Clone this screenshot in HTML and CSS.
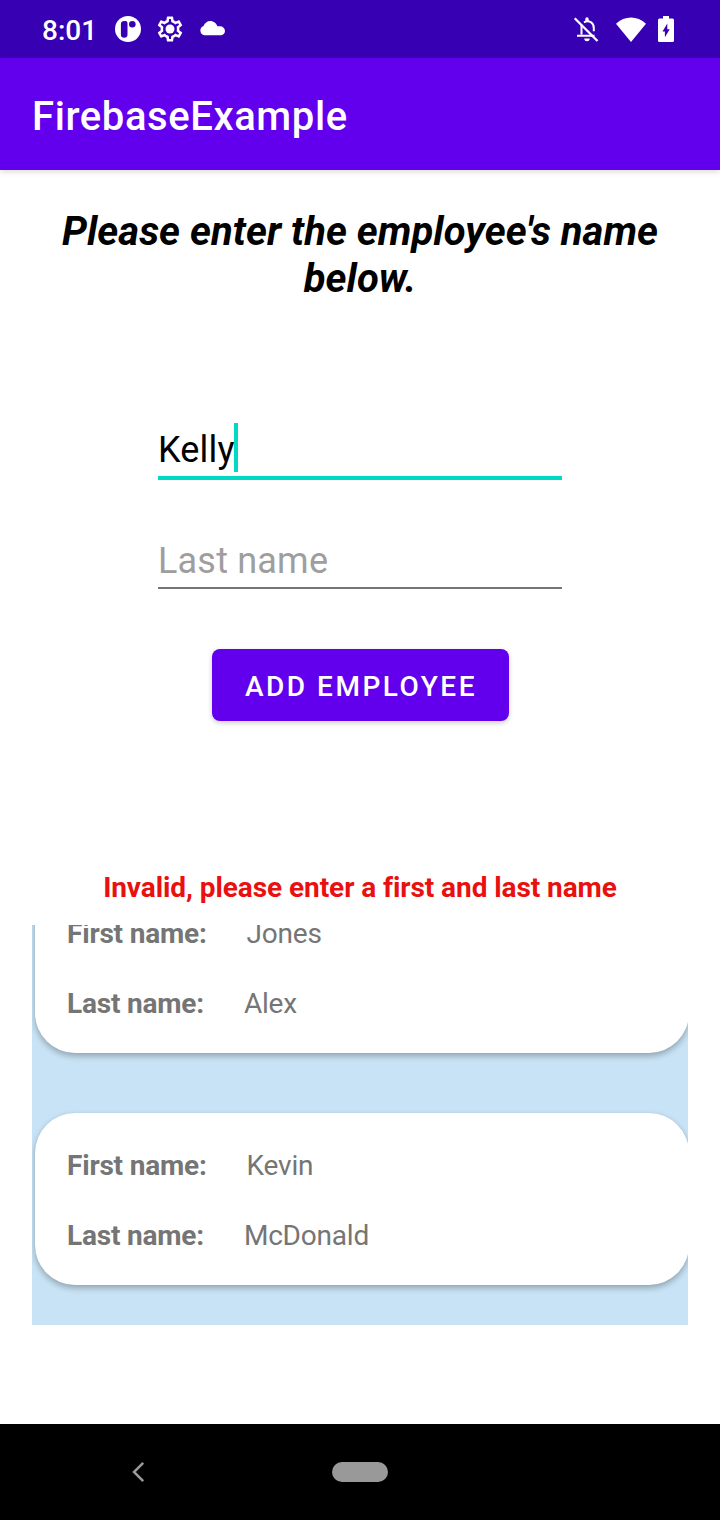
FILE: index.html
```html
<!DOCTYPE html>
<html lang="en">
<head>
<meta charset="utf-8">
<title>FirebaseExample</title>
<link rel="stylesheet" href="styles.css">
</head>
<body>
<div class="screen">
  <div class="status-bar">
    <span class="clock">8:01</span>
    <svg class="icon-app" width="26" height="26" viewBox="0 0 26 26"><circle cx="13" cy="13" r="13" fill="#fff"/><path d="M9.200 5h1.300a2 2 0 0 1 2 2v11.500a3.300 3.300 0 0 1-6.600 0V8.300A3.300 3.300 0 0 1 9.200 5z" fill="#3700b3"/><circle cx="17.300" cy="8.300" r="3.300" fill="#3700b3"/></svg>
    <svg class="icon-gear" width="30" height="30" viewBox="0 0 24 24" fill="#fff"><path d="M19.43 12.98c.04-.32.07-.64.07-.98s-.03-.66-.07-.98l2.11-1.65c.19-.15.24-.42.12-.64l-2-3.46c-.09-.16-.26-.25-.44-.25-.06 0-.12.01-.17.03l-2.49 1c-.52-.4-1.08-.73-1.69-.98l-.38-2.65C14.46 2.18 14.25 2 14 2h-4c-.25 0-.46.18-.49.42l-.38 2.65c-.61.25-1.17.59-1.69.98l-2.49-1c-.06-.02-.12-.03-.18-.03-.17 0-.34.09-.43.25l-2 3.46c-.13.22-.07.49.12.64l2.11 1.65c-.04.32-.07.65-.07.98s.03.66.07.98l-2.11 1.65c-.19.15-.24.42-.12.64l2 3.46c.09.16.26.25.44.25.06 0 .12-.01.17-.03l2.49-1c.52.4 1.08.73 1.69.98l.38 2.65c.03.24.24.42.49.42h4c.25 0 .46-.18.49-.42l.38-2.65c.61-.25 1.17-.59 1.69-.98l2.49 1c.06.02.12.03.18.03.17 0 .34-.09.43-.25l2-3.46c.12-.22.07-.49-.12-.64l-2.11-1.65zm-1.98-1.71c.04.31.05.52.05.73s-.02.43-.05.73l-.14 1.13.89.7 1.08.84-.7 1.21-1.27-.51-1.04-.42-.9.68c-.43.32-.84.56-1.25.73l-1.06.43-.16 1.13-.2 1.35h-1.4l-.19-1.35-.16-1.13-1.06-.43c-.43-.18-.83-.41-1.23-.71l-.91-.7-1.06.43-1.27.51-.7-1.21 1.08-.84.89-.7-.14-1.13c-.03-.31-.05-.54-.05-.74s.02-.43.05-.73l.14-1.13-.89-.7-1.08-.84.7-1.21 1.27.51 1.04.42.9-.68c.43-.32.84-.56 1.25-.73l1.06-.43.16-1.13.2-1.35h1.39l.19 1.35.16 1.13 1.06.43c.43.18.83.41 1.23.71l.91.7 1.06-.43 1.27-.51.7 1.21-1.07.85-.89.7.14 1.13z"/><circle cx="12" cy="12" r="3.6"/></svg>
    <svg class="icon-cloud" width="26" height="16" viewBox="0 0 26 16" fill="#fff"><path d="M5 14.300a4.900 4.900 0 0 1-.5-9.300C5.600 2 8.200 0 11.200 0c3.400 0 6.200 2.300 7.200 5.300h2.200a4.800 4.800 0 0 1 5.400 4.600 4.400 4.400 0 0 1-4.500 4.400z"/></svg>
    <div class="status-right">
      <svg width="28" height="28" viewBox="0 0 28 28"><path d="M8.500 9.500v10M4 20.700h17.500M11 7.300c5-2.700 9.800.5 9.800 5.600v3.300" fill="none" stroke="#fff" stroke-width="2"/><path d="M12.300 6.500V4a1.700 1.700 0 0 1 3.400 0v2.500zM11.300 23.500h5.400a2.700 2.700 0 0 1-5.400 0z" fill="#fff"/><path d="M1.700 3.200L24.500 26" stroke="#fff" stroke-width="2.300"/></svg>
      <svg class="icon-wifi" width="30" height="25" viewBox="0 0 30 25"><path d="M0 6.700C8.700-1.700 21.300-1.700 30 6.700L15 25z" fill="#fff"/></svg>
      <svg class="icon-battery" width="16" height="26" viewBox="0 0 16 26"><path d="M5 0h6v2.500h3.500A1.500 1.500 0 0 1 16 4v20.500a1.500 1.500 0 0 1-1.500 1.500h-13A1.500 1.500 0 0 1 0 24.500V4a1.500 1.500 0 0 1 1.500-1.500H5z" fill="#fff"/><path d="M9.300 7.500v5.700h2.400L6.900 21.300v-5.900H4.500z" fill="#3700b3"/></svg>
    </div>
  </div>
  <header class="app-bar">FirebaseExample</header>
  <main class="content">
    <h1 class="heading">Please enter the employee's name below.</h1>
    <div class="field field-active"><span>Kelly</span><i class="caret"></i></div>
    <div class="field field-empty"><span>Last name</span></div>
    <button class="add-button">ADD EMPLOYEE</button>
    <p class="error">Invalid, please enter a first and last name</p>
    <div class="list">
      <div class="card">
        <div class="row"><b>First name:</b><span>Jones</span></div>
        <div class="row"><b>Last name:</b><span>Alex</span></div>
      </div>
      <div class="card">
        <div class="row"><b>First name:</b><span>Kevin</span></div>
        <div class="row"><b>Last name:</b><span>McDonald</span></div>
      </div>
    </div>
  </main>
  <nav class="nav-bar">
    <svg class="back" width="14" height="22" viewBox="0 0 14 22"><path d="M11.200 1.800L2 11l9.200 9.200" fill="none" stroke="#999" stroke-width="2.500"/></svg>
    <div class="home"></div>
  </nav>
</div>
</body>
</html>
```
FILE: styles.css
```css
* { box-sizing: border-box; }
body { margin: 0; font-family: Roboto, sans-serif; background: #fff; }
.screen { width: 720px; height: 1520px; display: flex; flex-direction: column; overflow: hidden; }
.status-bar { height: 58px; flex: none; background: #3700b3; color: #fff; display: flex; align-items: center; padding: 0 46px 0 42px; }
.clock { font-size: 28px; font-weight: 500; line-height: 34px; width: 73px; padding-top: 3px; }
.icon-gear { margin-left: 14px; }
.icon-cloud { margin-left: 14px; }
.status-right { margin-left: auto; display: flex; align-items: center; }
.icon-wifi { margin-left: 15px; }
.icon-battery { margin-left: 12px; }
.app-bar { height: 112px; flex: none; background: #6200ee; color: #fff; font-size: 40px; font-weight: 500; line-height: 118px; padding-left: 32px; letter-spacing: 0.6px; box-shadow: 0 2px 6px rgba(0,0,0,.14); }
.content { flex: 1; display: flex; flex-direction: column; align-items: center; padding: 38px 30px 0; }
.heading { margin: 0; font-size: 40px; line-height: 47px; font-weight: 700; font-style: italic; text-align: center; color: #000; letter-spacing: .04px; }
.field { width: 404px; display: flex; align-items: flex-start; font-size: 36px; line-height: 49px; letter-spacing: .2px; }
.field span { padding-top: 3px; }
.field-active { margin-top: 121px; height: 57px; color: #000; border-bottom: 4px solid #00dac5; }
.caret { width: 4px; height: 49px; margin-left: -1px; background: #00dac5; }
.field-empty { margin-top: 56px; height: 53px; color: #9e9e9e; border-bottom: 2px solid #757575; }
.field-empty span { padding-top: 1px; }
.add-button { margin: 60px 0 0 1px; width: 297px; height: 72px; border: 0; border-radius: 8px; background: #6200ee; color: #fff; font: 500 28px/72px Roboto, sans-serif; letter-spacing: 2.500px; padding: 2px 0 0 1px; box-shadow: 0 2px 5px rgba(0,0,0,.2); }
.error { margin: 150px 0 0; font-size: 28px; line-height: 33px; font-weight: 700; color: #e91010; white-space: nowrap; letter-spacing: -.07px; }
.list { margin-top: 21px; width: 656px; height: 400px; flex: none; background: #c8e3f5; overflow: hidden; display: flex; flex-direction: column; justify-content: flex-end; gap: 60px; padding: 0 0 40px 3px; }
.card { flex: none; width: 654px; height: 172px; border-radius: 40px; background: #fff; padding: 36px 32px 0; display: flex; flex-direction: column; gap: 37px; box-shadow: 0 3px 6px rgba(0,0,0,.28), 0 0 2px rgba(0,0,0,.06); color: #757575; font-size: 28px; line-height: 33px; }
.row { display: flex; gap: 40px; height: 33px; letter-spacing: -.2px; }
.nav-bar { height: 96px; flex: none; background: #000; display: flex; align-items: center; padding-left: 132px; }
.home { margin-left: 186px; width: 56px; height: 20px; border-radius: 10px; background: #999; }
```
